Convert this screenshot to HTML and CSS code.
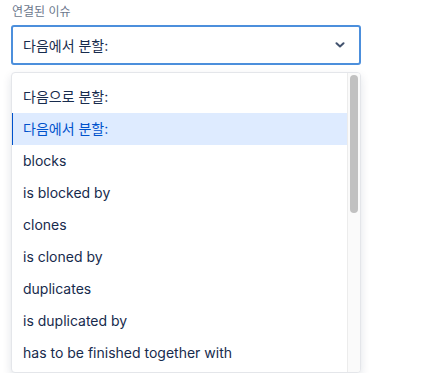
FILE: index.html
```html
<!DOCTYPE html>
<html lang="ko">
<head>
  <meta charset="UTF-8">
  <title>연결된 이슈</title>
  <link rel="stylesheet" href="styles.css">
</head>
<body>

  <div class="field">
    <div class="field-label">연결된 이슈</div>

    <div class="select">
      <span class="select-value">다음에서 분할:</span>
      <svg class="chevron" width="10" height="6" viewBox="0 0 10 6">
        <path d="M1.5 1.2 L5 4.5 L8.5 1.2" fill="none" stroke="#42526e" stroke-width="2" stroke-linecap="round" stroke-linejoin="round"/>
      </svg>
    </div>

    <div class="menu">
      <ul class="options">
        <li class="option">다음으로 분할:</li>
        <li class="option selected">다음에서 분할:</li>
        <li class="option">blocks</li>
        <li class="option">is blocked by</li>
        <li class="option">clones</li>
        <li class="option">is cloned by</li>
        <li class="option">duplicates</li>
        <li class="option">is duplicated by</li>
        <li class="option">has to be finished together with</li>
      </ul>
      <div class="scrollbar">
        <div class="thumb"></div>
      </div>
    </div>
  </div>

</body>
</html>
```

FILE: styles.css
```css
body {
  margin: 0;
  font-family: 'Inter', 'Noto Sans CJK KR', sans-serif;
  color: #172b4d;
  background: #fff;
}
.field {
  padding: 4px 0 0 11px;
  width: 350px;
}
.field-label {
  font-size: 12px;
  font-weight: 400;
  color: #6b778c;
  line-height: 16px;
  padding-left: 1px;
  margin-bottom: 5px;
}
.select {
  box-sizing: border-box;
  height: 40px;
  border: 2px solid #4c8fdc;
  border-radius: 3px;
  display: flex;
  align-items: center;
  justify-content: space-between;
  padding: 0 14px 0 10px;
  font-size: 14px;
}
.chevron {
  display: block;
}
.menu {
  box-sizing: border-box;
  margin-top: 7px;
  height: 301px;
  border: 1px solid #e4e6ea;
  border-radius: 4px;
  box-shadow: 0 4px 10px rgba(9, 30, 66, 0.12);
  display: flex;
  overflow: hidden;
  background: #fff;
}
.options {
  list-style: none;
  margin: 0;
  padding: 8px 0 0;
  flex: 1;
}
.option {
  height: 32px;
  line-height: 32px;
  font-size: 14px;
  padding-left: 10px;
  border-left: 2px solid transparent;
  margin-left: -1px;
  white-space: nowrap;
}
.option.selected {
  background: #deebff;
  border-left-color: #0052cc;
  color: #0052cc;
}
.scrollbar {
  width: 13px;
  border-left: 1px solid #ececec;
  background: #fafafa;
  padding: 2px 3px 0 2px;
  box-sizing: border-box;
}
.thumb {
  width: 8px;
  height: 138px;
  border-radius: 4px;
  background: #c1c1c1;
}
```
